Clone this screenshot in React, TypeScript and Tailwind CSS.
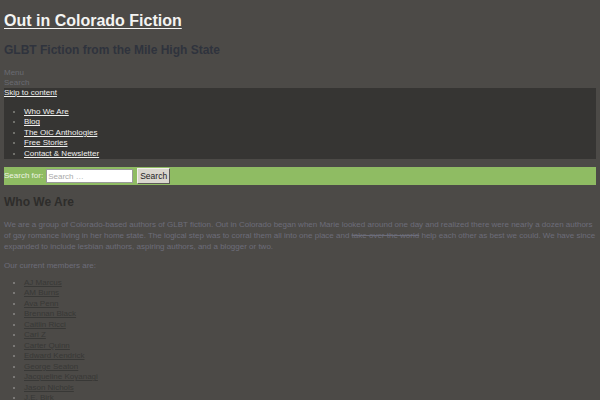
const NAV = ["Who We Are", "Blog", "The OiC Anthologies", "Free Stories", "Contact & Newsletter"];

const MEMBERS = [
  "AJ Marcus",
  "AM Burns",
  "Ava Penn",
  "Brennan Black",
  "Caitlin Ricci",
  "Cari Z",
  "Carter Quinn",
  "Edward Kendrick",
  "George Seaton",
  "Jacqueline Koyanagi",
  "Jason Nichols",
  "J.E. Birk",
];

export default function App() {
  return (
    <div className="h-[400px] overflow-hidden bg-[#4c4a47] px-1 font-['Liberation_Sans',Arial,sans-serif]">
      <header className="pt-[11px]">
        <h1 className="text-[16px] leading-[20px] font-bold text-[#f4f4f2]">
          <a href="#" className="underline underline-offset-[2px]">
            Out in Colorado Fiction
          </a>
        </h1>
        <h2 className="mt-[11px] text-[12px] leading-[16px] font-bold text-[#2f333d]">
          GLBT Fiction from the Mile High State
        </h2>
        <div className="mt-[10px] text-[8px] leading-[10px] text-[#6a6a72]">
          <div>Menu</div>
          <div>Search</div>
        </div>
      </header>

      <nav className="bg-[#363533] text-[8px] leading-[10px] text-[#f0f0ee]">
        <a href="#" className="block underline">
          Skip to content
        </a>
        <ul className="mt-[9px] list-disc pl-5 marker:text-[#85847f]">
          {NAV.map((n) => (
            <li key={n} className="leading-[10.4px]">
              <a href="#" className="underline">
                {n}
              </a>
            </li>
          ))}
        </ul>
      </nav>

      <form className="mt-2 flex h-[18px] items-center bg-[#8fbc63] text-[8px]">
        <label className="text-[#eef4e4]">Search for:</label>
        <input
          placeholder="Search …"
          className="ml-[3px] h-[14px] w-[87px] border border-[#9a9a9a] bg-white px-[1px] text-[8px] text-[#333] placeholder:text-[#a9a9a9] focus:outline-none"
        />
        <button
          type="button"
          className="ml-1 h-[16px] w-[33px] border border-t-[#f2f0ea] border-l-[#f2f0ea] border-r-[#5c5a55] border-b-[#5c5a55] bg-[#d9d6ce] text-[8.5px] leading-none text-[#222]"
        >
          Search
        </button>
      </form>

      <main className="mt-[9px]">
        <h2 className="text-[12px] leading-[16px] font-bold text-[#2e2d2b]">Who We Are</h2>
        <p className="mt-[9px] text-[8px] leading-[11px] text-[#6c6d7a]">
          We are a group of Colorado-based authors of GLBT fiction. Out in Colorado began when Marie looked
          around one day and realized there were nearly a dozen authors of gay romance living in her home state.
          The logical step was to corral them all into one place and <s>take over the world</s> help each other
          as best we could. We have since expanded to include lesbian authors, aspiring authors, and a blogger or
          two.
        </p>
        <p className="mt-2 text-[8px] leading-[11px] text-[#6c6d7a]">Our current members are:</p>
        <ul className="mt-[7px] list-disc pl-5 text-[8px] text-[#383836] marker:text-[#8a8986]">
          {MEMBERS.map((m) => (
            <li key={m} className="leading-[10.45px]">
              <a href="#" className="underline">
                {m}
              </a>
            </li>
          ))}
        </ul>
      </main>
    </div>
  );
}
